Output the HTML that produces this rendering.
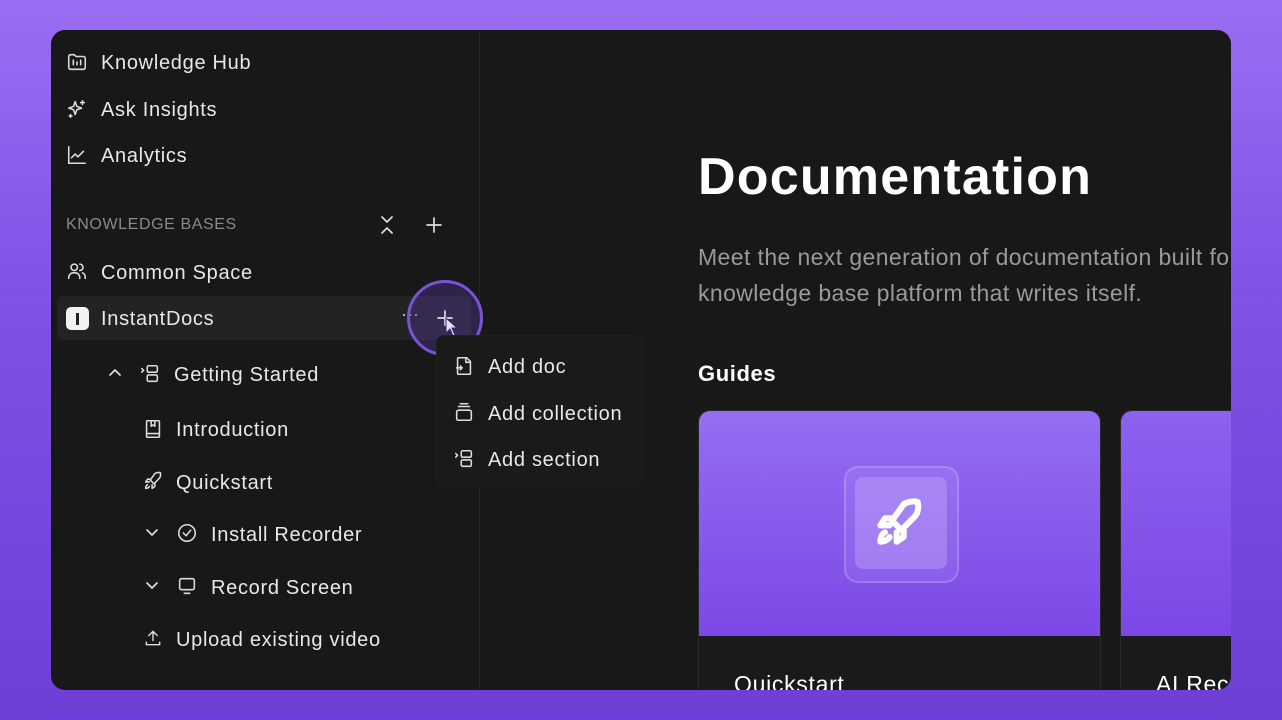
<!DOCTYPE html>
<html><head><meta charset="utf-8"><style>
*{margin:0;padding:0;box-sizing:border-box}
body{width:1282px;height:720px;overflow:hidden;position:relative;font-family:"Liberation Sans",sans-serif;
background:linear-gradient(180deg,#9a6ef2 0%,#8053e6 40%,#6d3fd6 100%)}
.panel{position:absolute;left:51px;top:30px;width:1180px;height:660px;background:#181818;border-radius:14px;overflow:hidden}
.side{position:absolute;left:0;top:0;width:429px;height:660px;border-right:1px solid #262626}
.t{position:absolute;color:#e8e8e8;font-size:20px;letter-spacing:0.7px;white-space:nowrap;line-height:1}
.ic{position:absolute;fill:none;stroke:#dcdcdc;stroke-width:1.7;stroke-linecap:round;stroke-linejoin:round}
</style></head><body>
<div class="panel">
 <div class="side">
  <svg class="ic" style="left:15px;top:21px" width="22" height="22" viewBox="0 0 24 24"><path d="M3 6a2 2 0 0 1 2-2h4l2 2h8a2 2 0 0 1 2 2v10a2 2 0 0 1-2 2H5a2 2 0 0 1-2-2z"/><path d="M8 15v-5M12 15v-3M16 15v-5"/></svg>
  <div class="t" style="left:50px;top:23px">Knowledge Hub</div>
  <svg class="ic" style="left:15px;top:68px" width="22" height="22" viewBox="0 0 24 24"><path d="M10 4l1.8 5.2L17 11l-5.2 1.8L10 18l-1.8-5.2L3 11l5.2-1.8z"/><path d="M18 3v4M16 5h4M5 18v3M3.5 19.5h3"/></svg>
  <div class="t" style="left:50px;top:70px">Ask Insights</div>
  <svg class="ic" style="left:15px;top:114px" width="22" height="22" viewBox="0 0 24 24"><path d="M3 3v18h18"/><path d="M6 15l4-4 3 3 6-6"/></svg>
  <div class="t" style="left:50px;top:116px">Analytics</div>
  <div class="t" style="left:15px;top:187px;font-size:16px;letter-spacing:0.6px;color:#8a8a8a">KNOWLEDGE BASES</div>
  <svg class="ic" style="left:326px;top:184px" width="20" height="22" viewBox="0 0 20 22"><path d="M5 3l5 5 5-5M5 19l5-5 5 5"/></svg>
  <svg class="ic" style="left:373px;top:185px" width="20" height="20" viewBox="0 0 20 20"><path d="M10 3v14M3 10h14"/></svg>
  <svg class="ic" style="left:15px;top:230px" width="22" height="22" viewBox="0 0 24 24"><circle cx="9" cy="8" r="3.5"/><path d="M3 20v-1a5 5 0 0 1 5-5h2a5 5 0 0 1 5 5v1M15 4.5a3.5 3.5 0 0 1 0 7M18 14a5 5 0 0 1 3 5v1"/></svg>
  <div class="t" style="left:50px;top:233px">Common Space</div>
  <div style="position:absolute;left:6px;top:266px;width:414px;height:44px;background:#232323;border-radius:6px"></div>
  <div style="position:absolute;left:15px;top:277px;width:23px;height:23px;background:#f2f2f2;border-radius:5px"><div style="position:absolute;left:10px;top:6px;width:3px;height:12px;background:#222"></div></div>
  <div class="t" style="left:50px;top:279px">InstantDocs</div>
  <div class="t" style="left:350px;top:275px;font-size:18px;letter-spacing:0;color:#ccc">···</div>
  <div style="position:absolute;left:356px;top:250px;width:76px;height:76px;border-radius:50%;border:3px solid #7a52d6;background:rgba(90,60,170,0.35)"></div>
  <svg class="ic" style="left:384px;top:278px" width="20" height="20" viewBox="0 0 20 20"><path d="M10 3v14M3 10h14"/></svg>
  <svg style="position:absolute;left:393px;top:286px" width="16" height="22" viewBox="0 0 16 22"><path d="M2 2v15l4-4 3 7 2-1-3-7h5z" fill="#e8e0ff" stroke="#3a2a6a" stroke-width="1"/></svg>
  <svg class="ic" style="left:56px;top:335px" width="16" height="16" viewBox="0 0 16 16"><path d="M3 10l5-5 5 5"/></svg>
  <svg class="ic" style="left:88px;top:333px" width="22" height="22" viewBox="0 0 24 24"><path d="M3 6l2 2-2 2"/><rect x="9" y="3" width="11" height="7" rx="1.5"/><rect x="9" y="13" width="11" height="7" rx="1.5"/></svg>
  <div class="t" style="left:123px;top:335px">Getting Started</div>
  <svg class="ic" style="left:91px;top:388px" width="22" height="22" viewBox="0 0 24 24"><path d="M5 4a1 1 0 0 1 1-1h12a1 1 0 0 1 1 1v16a1 1 0 0 1-1 1H6a1 1 0 0 1-1-1z M5 17h14M10 3v6l2-1.5 2 1.5V3"/></svg>
  <div class="t" style="left:125px;top:390px">Introduction</div>
  <svg class="ic" style="left:91px;top:440px" width="22" height="22" viewBox="0 0 24 24"><path d="M14 4c3-2 6-1 6-1s1 3-1 6l-6 6-4-4z M9 10l-3 0-2 3 4 0M14 15v3l-3 2v-4M6 16c-2 1-2 4-2 4s3 0 4-2"/></svg>
  <div class="t" style="left:125px;top:443px">Quickstart</div>
  <svg class="ic" style="left:93px;top:494px" width="16" height="16" viewBox="0 0 16 16"><path d="M3 6l5 5 5-5"/></svg>
  <svg class="ic" style="left:125px;top:492px" width="22" height="22" viewBox="0 0 24 24"><circle cx="12" cy="12" r="9"/><path d="M8 12l3 3 5-6"/></svg>
  <div class="t" style="left:160px;top:495px">Install Recorder</div>
  <svg class="ic" style="left:93px;top:547px" width="16" height="16" viewBox="0 0 16 16"><path d="M3 6l5 5 5-5"/></svg>
  <svg class="ic" style="left:125px;top:545px" width="22" height="22" viewBox="0 0 24 24"><rect x="4" y="4" width="16" height="12" rx="2"/><path d="M9 20h6"/></svg>
  <div class="t" style="left:160px;top:548px">Record Screen</div>
  <svg class="ic" style="left:92px;top:598px" width="20" height="20" viewBox="0 0 24 24"><path d="M12 15V4M7 9l5-5 5 5M4 17v3h16v-3"/></svg>
  <div class="t" style="left:125px;top:600px">Upload existing video</div>
 </div>
 <div style="position:absolute;left:385px;top:305px;width:207px;height:152px;background:#1a1a1a;border:1px solid #1f1f1f;border-radius:8px"></div>
 <svg class="ic" style="left:402px;top:325px" width="22" height="22" viewBox="0 0 24 24"><path d="M6 3h9l4 4v13a1 1 0 0 1-1 1H6a1 1 0 0 1-1-1V4a1 1 0 0 1 1-1zM14 3v5h5M4 14h6M8 12l2 2-2 2"/></svg>
 <div class="t" style="left:437px;top:327px">Add doc</div>
 <svg class="ic" style="left:402px;top:371px" width="22" height="22" viewBox="0 0 24 24"><rect x="4" y="10" width="16" height="11" rx="2"/><path d="M6 6h12M8 3h8"/></svg>
 <div class="t" style="left:437px;top:374px">Add collection</div>
 <svg class="ic" style="left:402px;top:418px" width="22" height="22" viewBox="0 0 24 24"><path d="M3 6l2 2-2 2"/><rect x="9" y="3" width="11" height="7" rx="1.5"/><rect x="9" y="13" width="11" height="7" rx="1.5"/></svg>
 <div class="t" style="left:437px;top:420px">Add section</div>

 <div class="t" style="left:647px;top:121px;font-size:52px;letter-spacing:1.2px;font-weight:bold;color:#fff">Documentation</div>
 <div class="t" style="left:647px;top:209px;font-size:23px;letter-spacing:0.4px;color:#9a9a9a;line-height:36px">Meet the next generation of documentation built for<br>knowledge base platform that writes itself.</div>
 <div class="t" style="left:647px;top:333px;font-size:22px;letter-spacing:0.6px;font-weight:bold;color:#fff">Guides</div>
 <div style="position:absolute;left:647px;top:380px;width:403px;height:300px;border:1px solid #2a2a2a;border-radius:12px;overflow:hidden;background:#1a1a1a">
  <div style="height:225px;background:linear-gradient(180deg,#946ef2,#7c48e6)"></div>
  <div class="t" style="left:35px;top:262px;font-size:23px;color:#fff">Quickstart</div>
  <div style="position:absolute;left:145px;top:55px;width:115px;height:117px;border-radius:14px;background:rgba(255,255,255,0.08);border:2px solid rgba(255,255,255,0.18)"></div>
  <div style="position:absolute;left:156px;top:66px;width:92px;height:92px;border-radius:8px;background:rgba(200,180,255,0.35)"></div>
  <svg class="ic" style="left:172px;top:84px;stroke:#fff;stroke-width:2.6" width="56" height="56" viewBox="0 0 24 24"><path d="M14 4c3-2 6-1 6-1s1 3-1 6l-6 6-4-4z M9 10l-3 0-2 3 4 0M14 15v3l-3 2v-4M6 16c-2 1-2 4-2 4s3 0 4-2"/></svg>
 </div>
 <div style="position:absolute;left:1069px;top:380px;width:200px;height:300px;border:1px solid #2a2a2a;border-radius:12px;overflow:hidden;background:#1a1a1a">
  <div style="height:225px;background:linear-gradient(180deg,#8c62ee,#7c48e6)"></div>
  <div class="t" style="left:35px;top:262px;font-size:23px;color:#fff">AI Recorder</div>
 </div>
</div>
</body></html>
